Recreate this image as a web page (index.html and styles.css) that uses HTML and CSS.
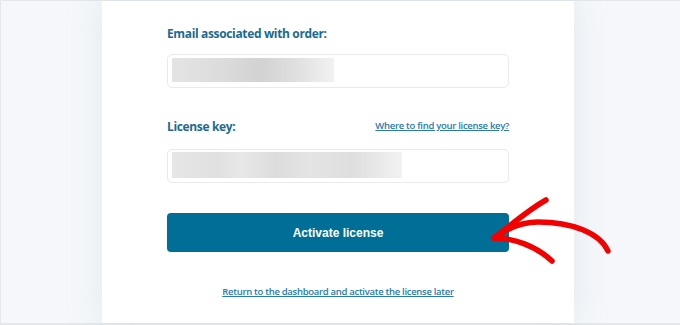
FILE: index.html
```html
<!DOCTYPE html>
<html lang="en">
<head>
<meta charset="utf-8">
<title>Activate license</title>
<link rel="stylesheet" href="styles.css">
</head>
<body>
<div class="frame">
  <div class="card">
    <form class="form">
      <label class="label label-email">Email associated with order:</label>
      <div class="input"><div class="blur blur-email"></div></div>

      <div class="row">
        <label class="label">License key:</label>
        <a class="help" href="#">Where to find your license key?</a>
      </div>
      <div class="input"><div class="blur blur-key"></div></div>

      <button class="btn" type="button">Activate license</button>

      <a class="later" href="#">Return to the dashboard and activate the license later</a>
    </form>
  </div>
</div>
<svg class="arrow" width="680" height="325" viewBox="0 0 680 325" xmlns="http://www.w3.org/2000/svg">
  <g fill="none" stroke="#f20000" stroke-width="5.5" stroke-linecap="round" stroke-linejoin="round">
    <path d="M608 251 C 600 233, 572 222, 538 222 C 520 222, 506 229, 494 238"/>
    <path d="M494 238 C 510 226, 528 210, 546 200"/>
    <path d="M494 238 C 514 238, 536 246, 552 261"/>
  </g>
</svg>
</body>
</html>
```

FILE: styles.css
```css
* { box-sizing: border-box; }
html, body { margin: 0; padding: 0; }
body {
  width: 680px;
  height: 325px;
  overflow: hidden;
  background: #f5f7fa;
  font-family: "Open Sans", "Liberation Sans", sans-serif;
  position: relative;
}
.frame {
  height: 325px;
  border-top: 1px solid #e4e7eb;
  border-left: 1px solid #e4e7eb;
  border-bottom: 2px solid #e4e7eb;
  padding-left: 101px;
  display: flex;
}
.card {
  width: 472px;
  background: #fff;
  box-shadow: 0 0 30px rgba(190, 205, 220, 0.35);
  padding: 24px 65px 0 65px;
}
.form { display: flex; flex-direction: column; }
.label {
  color: #1a6a92;
  font-weight: 700;
  font-size: 12px;
  line-height: 18px;
  letter-spacing: -0.35px;
}
.label-email { margin-bottom: 11px; }
.input {
  height: 34px;
  border: 1px solid #e8eaed;
  border-radius: 5px;
  padding: 3px 4px;
  display: flex;
}
.blur {
  height: 24px;
  background: linear-gradient(90deg, #e4e4e4 0%, #dcdcdc 30%, #d2d2d2 55%, #e2e2e2 80%, #f2f2f2 100%);
}
.blur-email { width: 162px; }
.blur-key {
  width: 230px;
  height: 26px;
  margin-top: -1px;
  background: linear-gradient(90deg, #e6e6e6 0%, #e0e0e0 20%, #e8e8e8 30%, #dcdcdc 45%, #e4e4e4 60%, #dedede 78%, #f2f2f2 100%);
}
.row {
  display: flex;
  justify-content: space-between;
  align-items: center;
  margin-top: 30px;
  margin-bottom: 13px;
}
.help {
  color: #2a7aab;
  font-size: 9.5px;
  font-weight: 600;
  letter-spacing: -0.3px;
  text-decoration: underline;
  margin-top: -3px;
}
.btn {
  margin-top: 30px;
  height: 39px;
  border: 0;
  border-radius: 4px;
  background: #006f97;
  color: #fff;
  font-family: "Liberation Sans", Arial, sans-serif;
  font-weight: 700;
  font-size: 12px;
}
.later {
  margin-top: 33px;
  align-self: center;
  color: #2a7aab;
  font-size: 9.5px;
  font-weight: 600;
  letter-spacing: -0.3px;
  line-height: 14px;
  text-decoration: underline;
}
.arrow {
  position: absolute;
  left: 0;
  top: 0;
  pointer-events: none;
}
```
